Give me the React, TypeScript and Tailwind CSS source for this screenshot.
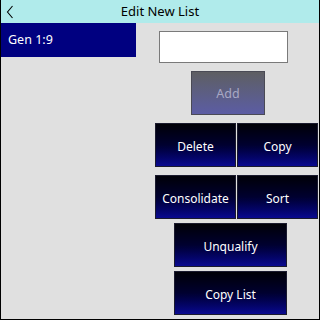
const font = { fontFamily: '"Noto Sans", "Open Sans", sans-serif' };

function NavButton({ label, className }: { label: string; className: string }) {
  return (
    <button
      className={`h-[44px] flex items-center justify-center pt-[3px] text-[12px] text-white border border-[#1a1a2e] bg-gradient-to-b from-[#000008] via-[#000030] to-[#0a0a90] ${className}`}
    >
      {label}
    </button>
  );
}

export default function App() {
  return (
    <div
      className="w-[320px] h-[320px] bg-[#e0e0e0] border-x border-b border-black flex flex-col overflow-hidden"
      style={font}
    >
      <div className="h-[23px] bg-[#b0ebeb] relative flex items-center justify-center pt-[1px] text-[13px] text-black shrink-0">
        <svg className="absolute left-[5px] top-[5px]" width="8" height="14" viewBox="0 0 8 14">
          <path d="M6.5 1 L1.5 7 L6.5 13" fill="none" stroke="#000" strokeWidth="1.1" />
        </svg>
        Edit New List
      </div>

      <div className="flex flex-1">
        <div className="w-[135px] shrink-0">
          <div className="h-[34px] bg-[#000080] text-white text-[12.5px] flex items-center pt-[1px] pl-[7px]">
            Gen 1:9
          </div>
        </div>

        <div className="flex flex-col flex-1">
          <input className="ml-[23px] mt-[8px] w-[129px] h-[32px] bg-white border border-[#7a7a7a] outline-none" />

          <button className="ml-[55px] mt-[8px] w-[74px] h-[44px] pt-[3px] text-[12.5px] text-[#a8a8c4] border border-[#4a4a55] bg-gradient-to-b from-[#5e5e62] to-[#5c5ca4]">
            Add
          </button>

          <div className="ml-[19px] mt-[8px] flex gap-[1px]">
            <NavButton label="Delete" className="w-[81px]" />
            <NavButton label="Copy" className="w-[81px]" />
          </div>

          <div className="ml-[19px] mt-[8px] flex gap-[1px]">
            <NavButton label="Consolidate" className="w-[81px]" />
            <NavButton label="Sort" className="w-[81px]" />
          </div>

          <NavButton label="Unqualify" className="ml-[38px] mt-[4px] w-[113px]" />
          <NavButton label="Copy List" className="ml-[38px] mt-[4px] w-[113px]" />
        </div>
      </div>
    </div>
  );
}
